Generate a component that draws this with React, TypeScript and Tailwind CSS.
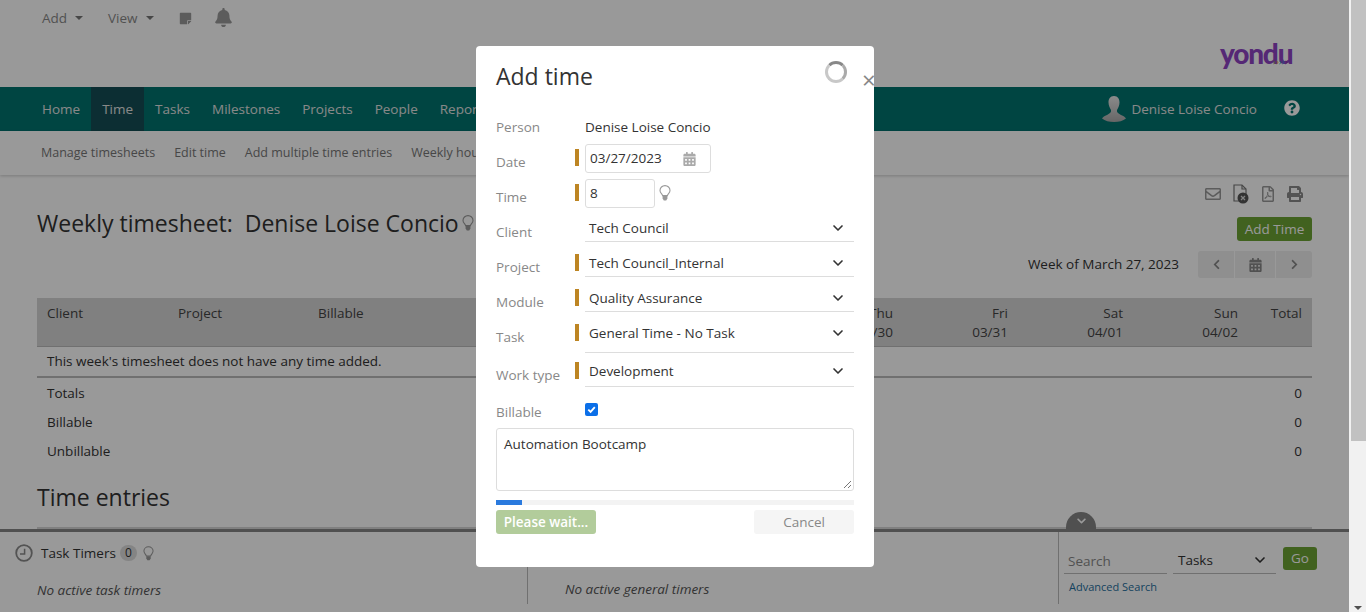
import { FaBell, FaStickyNote, FaCalendarAlt, FaPrint, FaQuestionCircle, FaRegEnvelope, FaRegFilePdf, FaChevronLeft, FaChevronRight, FaChevronDown } from "react-icons/fa";
import { ChevronDown } from "lucide-react";

const font = "font-['Open_Sans',sans-serif]";

function Caret() {
  return <span className="ml-2 inline-block h-0 w-0 border-x-[4px] border-t-[4px] border-x-transparent border-t-[#777]" />;
}

function Bulb({ className }: { className?: string }) {
  return (
    <svg viewBox="0 0 12 16" className={className} fill="none">
      <path d="M3.6 10.6C3.2 8.8 1 8 1 5.4A5 4.8 0 0 1 11 5.4C11 8 8.8 8.8 8.4 10.6Z" stroke="currentColor" strokeWidth="1.1" />
      <path d="M3.6 11h4.8v2.4L7.2 15.4H4.8L3.6 13.4Z" fill="currentColor" />
    </svg>
  );
}

function ClockIcon() {
  return (
    <svg viewBox="0 0 18 18" className="h-[18px] w-[18px] text-[#8a8a8a]" fill="none" stroke="currentColor">
      <circle cx="9" cy="9" r="7.8" strokeWidth="1.8" />
      <path d="M9.6 4.8V10H5" strokeWidth="1.5" />
    </svg>
  );
}

function ExcelIcon() {
  return (
    <svg viewBox="0 0 16 20" className="h-[20px] w-[16px] text-[#777]">
      <path d="M1 1H9L13 5V17H1Z" fill="none" stroke="currentColor" strokeWidth="1.2" />
      <path d="M9 1V5H13" fill="none" stroke="currentColor" strokeWidth="1.2" />
      <circle cx="10" cy="14" r="5.5" fill="#555" />
      <path d="M8 12L12 16M12 12L8 16" stroke="#ddd" strokeWidth="1.3" />
    </svg>
  );
}

function Avatar() {
  return (
    <svg viewBox="0 0 24 26" className="h-[26px] w-[24px]">
      <defs>
        <linearGradient id="av" x1="0" y1="0" x2="0" y2="1">
          <stop offset="0" stopColor="#e8e8e8" />
          <stop offset="1" stopColor="#aaaaaa" />
        </linearGradient>
      </defs>
      <path d="M12 0C8 0 6.5 3 6.5 6.5C6.5 10 8 12 9 14C9.5 16 8 17.5 5 19C2.5 20 1 21 0 22.5C3 25 7 26 12 26C17 26 21 25 24 22.5C23 21 21.5 20 19 19C16 17.5 14.5 16 15 14C16 12 17.5 10 17.5 6.5C17.5 3 16 0 12 0Z" fill="url(#av)" />
    </svg>
  );
}

function Logo() {
  const colors = ["#8cc63f", "#f7941d", "#00a99d", "#2e9bd6", "#92278f"];
  return (
    <div className="relative h-[30px] w-[70px] font-['Lato',sans-serif] text-[28px] leading-[26px] font-black tracking-[-1.2px] text-[#8e44c4]">
      yondu
      <div className="absolute top-[20px] left-[53px] flex">
        {colors.map((c) => (
          <svg key={c} viewBox="0 0 4 5" className="h-[5px] w-[3px]" fill="none" stroke={c} strokeWidth="1">
            <path d="M0.5 0.5L3 2.5L0.5 4.5" />
          </svg>
        ))}
      </div>
    </div>
  );
}

const navItems = ["Home", "Time", "Tasks", "Milestones", "Projects", "People", "Reports"];
const subItems = ["Manage timesheets", "Edit time", "Add multiple time entries", "Weekly hours"];
const days = [
  ["Mon", "03/27"],
  ["Tue", "03/28"],
  ["Wed", "03/29"],
  ["Thu", "03/30"],
  ["Fri", "03/31"],
  ["Sat", "04/01"],
  ["Sun", "04/02"],
];

function TotalRow({ label }: { label: string }) {
  return (
    <div className="flex h-[29px] items-center justify-between px-[10px] text-[#333]">
      <span>{label}</span>
      <span>0</span>
    </div>
  );
}

function Page() {
  return (
    <div className="flex h-[612px] w-[1349px] flex-col overflow-hidden bg-white text-[13.5px] text-[#333]">
      <div className="h-[87px] shrink-0 bg-white">
        <div className="flex items-start justify-between">
          <div className="flex h-[36px] items-center pl-[42px] text-[#888]">
            <span>Add</span>
            <Caret />
            <span className="ml-[25px]">View</span>
            <Caret />
            <FaStickyNote className="ml-[25px] h-[13px] w-[13px] text-[#999]" />
            <FaBell className="ml-[23px] h-[19px] w-[17px] -translate-y-[1px] text-[#999]" />
          </div>
          <div className="mt-[40px] mr-[59px]">
            <Logo />
          </div>
        </div>
      </div>

      <div className="flex h-[44px] shrink-0 items-stretch justify-between bg-[#00736f] pl-[31px] text-[#e3e3e3]">
        <div className="flex">
          {navItems.map((n) => (
            <div key={n} className={`flex items-center px-[11px] ${n === "Time" ? "bg-[#144e55]" : ""}`}>
              {n}
            </div>
          ))}
        </div>
        <div className="flex items-center pr-[49px]">
          <Avatar />
          <span className="ml-[5px]">Denise Loise Concio</span>
          <FaQuestionCircle className="ml-[27px] h-[16px] w-[16px] -translate-y-[1px] text-white" />
        </div>
      </div>

      <div className="flex h-[44px] shrink-0 items-center gap-[19px] pl-[41px] text-[12.5px] text-[#777] shadow-[0_1px_3px_rgba(0,0,0,0.2)]">
        {subItems.map((s) => (
          <span key={s}>{s}</span>
        ))}
      </div>

      <div className="flex min-h-0 flex-1 flex-col px-[37px]">
        <div className="flex h-[76px] shrink-0 justify-between pr-0">
          <div className="flex items-center pt-[20px]">
            <span className="text-[23px] text-[#333]">Weekly timesheet:&nbsp; Denise Loise Concio</span>
            <Bulb className="ml-[3px] h-[16px] w-[12px] text-[#999]" />
          </div>
          <div className="flex flex-col items-end">
            <div className="mt-[9px] mr-[9px] flex items-center gap-[12px] text-[#999]">
              <FaRegEnvelope className="h-[16px] w-[16px]" />
              <ExcelIcon />
              <FaRegFilePdf className="h-[16px] w-[14px]" />
              <FaPrint className="h-[16px] w-[16px] text-[#8a8a8a]" />
            </div>
            <div className="mt-[13px] flex h-[24px] w-[75px] items-center justify-center rounded-[3px] bg-[#6da334] text-white">Add Time</div>
          </div>
        </div>
        <div className="flex h-[47px] shrink-0 justify-end pt-0">
          <div className="flex h-[27px] items-center">
            <span className="mr-[19px] text-[#333]">Week of March 27, 2023</span>
            <div className="flex h-[27px] w-[114px] gap-px text-[#888]">
              <div className="flex w-[36px] items-center justify-center rounded-l-[3px] bg-[#eeeeee]">
                <FaChevronLeft className="h-[11px] w-[11px]" />
              </div>
              <div className="flex w-[40px] items-center justify-center bg-[#eeeeee]">
                <FaCalendarAlt className="h-[14px] w-[13px]" />
              </div>
              <div className="flex w-[36px] items-center justify-center rounded-r-[3px] bg-[#eeeeee]">
                <FaChevronRight className="h-[11px] w-[11px]" />
              </div>
            </div>
          </div>
        </div>

        <div className="grid h-[49px] shrink-0 grid-cols-[141px_140px_125px_repeat(7,115px)_64px] border-b border-[#bbb] bg-[#d5d5d5] pt-[6px] leading-[19px] text-[#444]">
          <div className="pl-[10px]">Client</div>
          <div className="pl-[0px]">Project</div>
          <div className="pl-[0px]">Billable</div>
          {days.map(([d, date]) => (
            <div key={d} className="pr-[10px] text-right">
              <div>{d}</div>
              <div>{date}</div>
            </div>
          ))}
          <div className="pr-[10px] text-right">Total</div>
        </div>
        <div className="flex h-[31px] shrink-0 items-center border-b-2 border-[#bbb] px-[10px]">This week's timesheet does not have any time added.</div>
        <div className="shrink-0 pt-[1px]">
          <TotalRow label="Totals" />
          <TotalRow label="Billable" />
          <TotalRow label="Unbillable" />
        </div>
        <div className="shrink-0 pt-[15px] text-[23px] leading-[32px] text-[#333]">Time entries</div>
        <div className="mt-[14px] h-[6px] shrink-0 bg-[#d5d5d5]" />
      </div>

      <div className="relative flex h-[83px] shrink-0 border-t-[3px] border-[#858585] bg-white">
        <div className="absolute -top-[20px] left-[1066px] flex h-[17px] w-[30px] items-start justify-center rounded-t-full bg-[#858585] pt-[4px]">
          <FaChevronDown className="h-[10px] w-[11px] text-white" />
        </div>
        <div className="h-[72px] w-[528px] border-r border-[#bbb]">
          <div className="flex items-center pt-[11px] pl-[15px]">
            <ClockIcon />
            <span className="ml-[8px]">Task Timers</span>
            <span className="ml-[4px] flex h-[16px] w-[17px] items-center justify-center rounded-full bg-[#ddd] text-[12px]">0</span>
            <Bulb className="ml-[6px] h-[15px] w-[11px] text-[#999]" />
          </div>
          <div className="mt-[17px] pl-[37px] italic text-[#555]">No active task timers</div>
        </div>
        <div className="h-[72px] w-[531px] border-r border-[#bbb]">
          <div className="mt-[47px] pl-[37px] italic text-[#555]">No active general timers</div>
        </div>
        <div className="flex flex-col pt-[15px] pl-[5px]">
          <div className="flex items-start">
            <div className="h-[27px] w-[103px] border-b border-[#bbb] pt-[4px] pl-[4px] text-[#888]">Search</div>
            <div className="ml-[6px] flex h-[27px] w-[103px] items-center justify-between border-b border-[#bbb] pr-[8px] pl-[5px]">
              <span>Tasks</span>
              <ChevronDown className="h-[16px] w-[16px]" strokeWidth={2.5} />
            </div>
            <div className="ml-[7px] flex h-[23px] w-[34px] items-center justify-center rounded-[3px] bg-[#6da334] text-white">Go</div>
          </div>
          <div className="mt-[5px] pl-[5px] text-[11px] text-[#1f6f9e]">Advanced Search</div>
        </div>
      </div>
    </div>
  );
}

function Marker() {
  return <div className="mt-[5px] mr-[6px] h-[17px] w-[4px] shrink-0 bg-[#bd8523]" />;
}

function Row({ label, marker, height, children }: { label: string; marker?: boolean; height: string; children: React.ReactNode }) {
  return (
    <div className={`flex ${height}`}>
      <div className="w-[79px] shrink-0 pt-[8px] text-[#888]">{label}</div>
      {marker ? <Marker /> : <div className="w-[10px] shrink-0" />}
      {children}
    </div>
  );
}

function SelectBox({ value, h }: { value: string; h: string }) {
  return (
    <div className={`flex ${h} flex-1 items-start justify-between border-b border-[#ddd] pt-[4px] pr-[8px] pl-[4px] text-[#333]`}>
      <span>{value}</span>
      <ChevronDown className="mt-[2px] h-[16px] w-[16px]" strokeWidth={2.5} />
    </div>
  );
}

function Modal() {
  return (
    <div className="absolute top-[46px] left-[476px] h-[521px] w-[398px] rounded-[4px] bg-white px-[20px] text-[13.5px] text-[#333]">
      <div className="relative h-[63px] pt-[13px] text-[23px] leading-[34px]">
        Add time
        <div className="absolute top-[15px] left-[329px] h-[22px] w-[22px] rounded-full border-[3px] border-[#c8c8c8] border-t-[#888] border-r-[#aaa]" />
        <div className="absolute top-[22px] left-[366px] text-[24px] leading-[24px] font-normal text-[#888]">×</div>
      </div>
      <Row label="Person" height="h-[35px]">
        <div className="pt-[8px]">Denise Loise Concio</div>
      </Row>
      <Row label="Date" marker height="h-[35px]">
        <div className="flex h-[29px] w-[126px] items-center justify-between rounded-[3px] border border-[#ddd] pr-[14px] pl-[4px]">
          <span>03/27/2023</span>
          <FaCalendarAlt className="h-[14px] w-[13px] text-[#aaa]" />
        </div>
      </Row>
      <Row label="Time" marker height="h-[35px]">
        <div className="flex h-[29px] w-[70px] items-center rounded-[3px] border border-[#ddd] pl-[4px]">8</div>
        <Bulb className="mt-[6px] ml-[4px] h-[16px] w-[12px] text-[#999]" />
      </Row>
      <Row label="Client" height="h-[35px]">
        <SelectBox value="Tech Council" h="h-[28px]" />
      </Row>
      <Row label="Project" marker height="h-[35px]">
        <SelectBox value="Tech Council_Internal" h="h-[28px]" />
      </Row>
      <Row label="Module" marker height="h-[35px]">
        <SelectBox value="Quality Assurance" h="h-[28px]" />
      </Row>
      <Row label="Task" marker height="h-[38px]">
        <SelectBox value="General Time - No Task" h="h-[34px]" />
      </Row>
      <Row label="Work type" marker height="h-[37px]">
        <SelectBox value="Development" h="h-[30px]" />
      </Row>
      <Row label="Billable" height="h-[34px]">
        <div className="mt-[9px] flex h-[13px] w-[13px] items-center justify-center rounded-[2px] bg-[#0b6fe8]">
          <svg viewBox="0 0 12 12" className="h-[11px] w-[11px]" fill="none" stroke="white" strokeWidth="2">
            <path d="M2.5 6.2L5 8.6L9.6 3.4" />
          </svg>
        </div>
      </Row>
      <div className="relative h-[63px] rounded-[3px] border border-[#ddd] px-[7px] pt-[5px]">
        Automation Bootcamp
        <svg viewBox="0 0 9 9" className="absolute right-[1px] bottom-[1px] h-[9px] w-[9px]" stroke="#777" strokeWidth="1">
          <path d="M1 8L8 1M5 8L8 5" />
        </svg>
      </div>
      <div className="mt-[9px] h-[5px] bg-[#f3f3f3]">
        <div className="h-[5px] w-[26px] bg-[#2a7ade]" />
      </div>
      <div className="mt-[5px] flex justify-between">
        <div className="flex h-[24px] w-[100px] items-center justify-center rounded-[3px] bg-[#b2cc9b] font-semibold text-white">Please wait...</div>
        <div className="flex h-[24px] w-[100px] items-center justify-center rounded-[3px] bg-[#f5f5f5] text-[#888]">Cancel</div>
      </div>
    </div>
  );
}

function Scrollbar() {
  return (
    <div className="flex h-[612px] w-[17px] shrink-0 flex-col items-end justify-between bg-[#f1f1f1]">
      <div className="h-[441px] w-[15px] bg-[#c1c1c1]" />
      <div className="mr-[4px] mb-[2px] h-0 w-0 border-x-[4px] border-t-[4px] border-x-transparent border-t-[#505050]" />
    </div>
  );
}

export default function App() {
  return (
    <div className={`flex h-[612px] w-[1366px] overflow-hidden ${font}`}>
      <div className="relative h-[612px] w-[1349px] shrink-0">
        <Page />
        <div className="absolute inset-0 bg-black/40" />
        <Modal />
      </div>
      <Scrollbar />
    </div>
  );
}
